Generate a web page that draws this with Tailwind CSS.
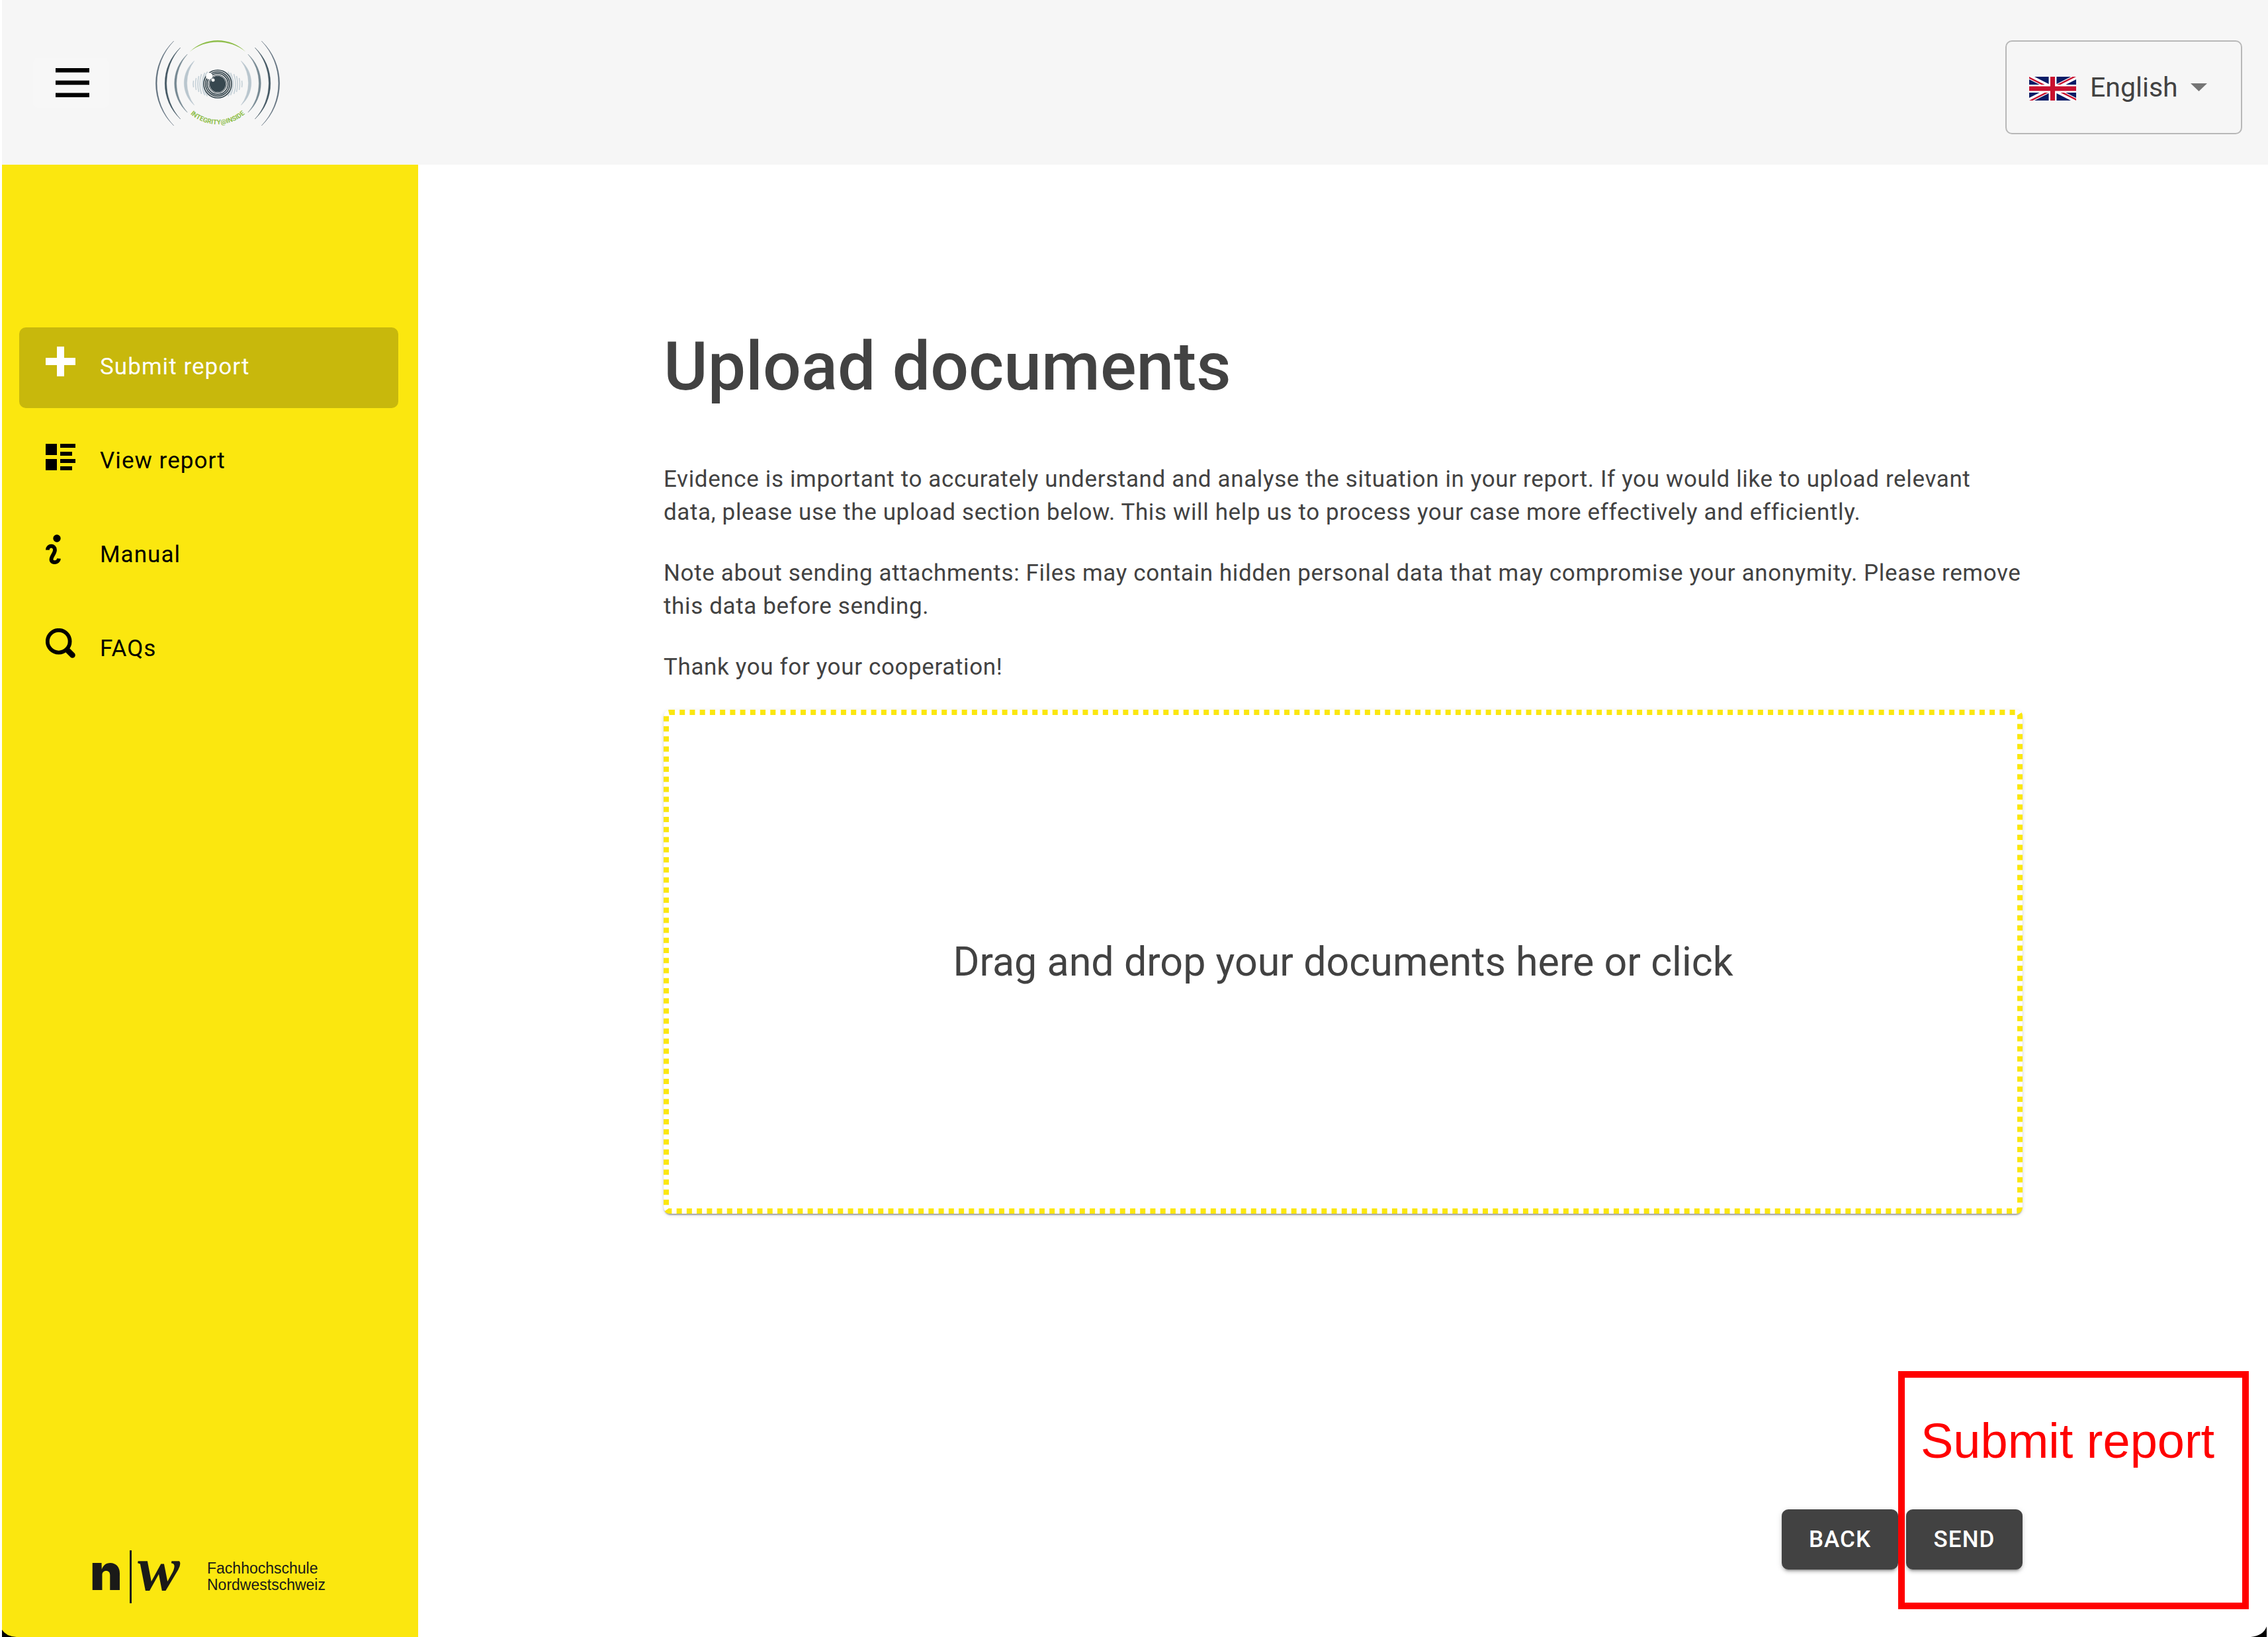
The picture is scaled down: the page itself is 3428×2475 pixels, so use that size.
<!DOCTYPE html>
<html lang="en">
<head>
<meta charset="utf-8">
<meta name="viewport" content="width=device-width, initial-scale=1">
<title>Upload documents</title>
<script src="https://cdn.jsdelivr.net/npm/@tailwindcss/browser@4"></script>
</head>
<body class="relative flex min-h-screen flex-col bg-white pl-[3px] font-['Roboto',sans-serif] text-[35px] leading-[50px] text-[#424242]">

<header class="flex h-[249px] shrink-0 items-center bg-[#f6f6f6] pr-[39px] pl-[47px]">
  <button type="button" aria-label="Toggle menu" class="flex h-[76px] w-[114px] items-center rounded-lg bg-[#f7f7f7] pl-[34px]">
    <svg class="h-[44px] w-[51px]" viewBox="0 0 51 44" aria-hidden="true"><path d="M0 0h51v6.500H0zM0 18.700h51v6.500H0zM0 37.500h51v6.500H0z"/></svg>
  </button>
  <a href="#" aria-label="Integrity@Inside" class="ml-[70px] block">
    <svg class="mt-1 h-[134px] w-[190px]" viewBox="-95 -67 190 134" aria-hidden="true">
      <defs>
        <g id="waves" stroke-width=".4">
          <path fill="#5a6b78" stroke="#5a6b78" d="M-66.300-65A88.700 88.700 0 0 0-66.300 63A92.800 92.800 0 0 1-66.300-65z"/>
          <path fill="#3f535f" stroke="#3f535f" d="M-56.300-55A73.800 73.800 0 0 0-56.300 53A79.900 79.900 0 0 1-56.300-55z"/>
          <path fill="#748791" stroke="#748791" d="M-45.800-45A59.400 59.400 0 0 0-45.800 43A66.900 66.900 0 0 1-45.800-45z"/>
          <path fill="#b9c6ce" stroke="#b9c6ce" d="M-35.300-35A44 44 0 0 0-35.300 32A56 56 0 0 1-35.300-35z"/>
          <g fill="none" stroke="#c3cfd6" stroke-width="1.500">
            <path d="M-36.500-5q-1 5 0 10M-32.500-9q-2 9 0 18M-28.500-12q-3 12 0 24M-24.500-15q-5 15 0 30M-19.500-17q-8 17 0 34M-15.500-18.500q-12 18.500 0 37"/>
          </g>
        </g>
        <path id="motto" d="M-62-1A62 62 0 0 0 62-1"/>
      </defs>
      <use href="#waves"/>
      <use href="#waves" transform="scale(-1 1)"/>
      <path fill="#8fbe4b" d="M-42.500-48.500A60.400 60.400 0 0 1 42.500-48.500A67.700 67.700 0 0 0-42.500-48.500z"/>
      <circle r="22" fill="#f6f6f6"/>
      <g fill="none" stroke="#37474f" stroke-width="1.700"><circle r="21"/><circle r="18.300"/><circle r="15.800"/><circle r="13.400" stroke-width="1"/></g>
      <circle r="12.200" fill="#37474f"/>
      <circle cx="-12.800" cy="-12" r="5" fill="#fff"/><circle cx="-7" cy="-6" r="2.500" fill="#fff"/>
      <text class="font-['Roboto',sans-serif] text-[10px] font-bold" fill="#8fbe4b" text-anchor="middle"><textPath href="#motto" startOffset="50%">INTEGRITY@INSIDE</textPath></text>
    </svg>
  </a>
  <div class="mt-[15px] ml-auto flex h-[142px] w-[358px] items-center rounded-[10px] border-2 border-[#b8b8b8] pl-[34px]">
    <svg class="mt-1 h-[36px] w-[71px] shrink-0" viewBox="0 0 60 30" preserveAspectRatio="none" aria-hidden="true">
      <defs><clipPath id="saltire"><path d="M30 15h30v15zv15H0zH0V0zV0h30z"/></clipPath></defs>
      <path fill="#0b1c66" d="M0 0h60v30H0z"/>
      <path stroke="#fff" stroke-width="6" d="M0 0l60 30M60 0L0 30"/>
      <path stroke="#c8102e" stroke-width="4" clip-path="url(#saltire)" d="M0 0l60 30M60 0L0 30"/>
      <path stroke="#fff" stroke-width="10" d="M30 0v30M0 15h60"/>
      <path stroke="#c8102e" stroke-width="6" d="M30 0v30M0 15h60"/>
    </svg>
    <select aria-label="Language" class="ml-[21px] w-[152px] appearance-none bg-transparent text-[41px] leading-[60px]"><option>English</option></select>
    <svg class="h-[12px] w-[25px]" viewBox="0 0 25 12" aria-hidden="true"><path fill="#757575" d="M0 0h25L12.500 12z"/></svg>
  </div>
</header>

<div class="flex grow">
  <aside class="flex w-[629px] shrink-0 flex-col bg-[#fbe70f] px-[26px] pt-[246px] pb-[25px] text-black">
    <nav class="flex w-[573px] flex-col gap-5 tracking-[0.03em]">
      <a href="#" aria-current="page" class="flex h-[122px] items-center gap-[37px] rounded-[10px] bg-[#c8b80c] pb-[2px] pl-[40px] text-white">
        <svg class="mb-[18px] size-[45px]" viewBox="0 0 45 45" fill="currentColor" aria-hidden="true"><path d="M17 0h11v17h17v11H28v17H17V28H0V17h17z"/></svg>Submit report</a>
      <a href="#" class="flex h-[122px] items-center gap-[37px] rounded-[10px] pb-[2px] pl-[40px]">
        <svg class="mb-[18px] size-[45px]" viewBox="0 0 45 45" fill="currentColor" aria-hidden="true"><path d="M0 5h17v17H0zM0 28h17v17H0zM22 5h23v6H22zM22 17h18v6H22zM22 28h23v6H22zM22 39h18v6H22z"/></svg>View report</a>
      <a href="#" class="flex h-[122px] items-center gap-[37px] rounded-[10px] pb-[2px] pl-[40px]">
        <svg class="mb-[18px] size-[45px]" viewBox="0 0 45 45" aria-hidden="true"><circle cx="17" cy="6" r="5.700"/><path fill="none" stroke="currentColor" stroke-width="5.800" d="M2.900 23.500C3 16 14 15.500 14 23.500C14 29 8.500 33 8.500 38C8.500 44 19.500 43.500 20 36.500"/></svg>Manual</a>
      <a href="#" class="flex h-[122px] items-center gap-[37px] rounded-[10px] pb-[2px] pl-[40px]">
        <svg class="mb-[18px] size-[45px]" viewBox="0 0 45 45" fill="none" stroke="currentColor" aria-hidden="true"><circle cx="19.700" cy="19.700" r="16.900" stroke-width="5.800"/><path stroke-width="8.500" stroke-linecap="round" d="M34 34l6.500 6.500"/></svg>FAQs</a>
    </nav>
    <a href="#" class="mt-auto flex items-center pl-[100px] text-[#1a1a18]">
      <svg class="h-[132px] w-[170px]" viewBox="-10 -25 170 132" fill="currentColor" aria-hidden="true">
        <text x="-3" y="61" class="font-['Inter',sans-serif] text-[75px] font-black">n</text>
        <path d="M57 1h3v80h-3z"/>
        <text x="69" y="61" class="font-['Liberation_Serif',serif] text-[96px] font-bold italic">w</text>
      </svg>
      <span class="ml-[14px] font-['Liberation_Sans',sans-serif] text-[23px] leading-[25px]">Fachhochschule<br>Nordwestschweiz</span>
    </a>
  </aside>

  <main class="flex grow flex-col px-10 pt-[245px] pb-[102px]">
    <div class="mx-auto flex w-full max-w-[2054px] grow flex-col">
      <h1 class="mb-[86px] text-[102px] leading-[120px] font-medium">Upload documents</h1>
      <div class="flex flex-col gap-[42px] tracking-[0.018em]">
        <p>Evidence is important to accurately understand and analyse the situation in your report. If you would like to upload relevant data, please use the upload section below. This will help us to process your case more effectively and efficiently.</p>
        <p>Note about sending attachments: Files may contain hidden personal data that may compromise your anonymity. Please remove this data before sending.</p>
        <p>Thank you for your cooperation!</p>
      </div>
      <label class="relative mt-[39px] flex h-[762px] cursor-pointer items-center justify-center rounded-[10px] bg-white text-[61px] leading-[80px] shadow-[0_4px_2px_-2px_rgba(0,0,0,0.2),0_2px_2px_rgba(0,0,0,0.14),0_2px_6px_rgba(0,0,0,0.12)]">
        <svg class="absolute inset-0 size-full" aria-hidden="true"><rect x="4" y="4" rx="5" class="h-[calc(100%-8px)] w-[calc(100%-8px)]" fill="none" stroke="#fbe70f" stroke-width="8" stroke-dasharray="8 7.230"/></svg>
        <input type="file" multiple class="sr-only">
        <span>Drag and drop your documents here or click</span>
      </label>
      <div class="mt-auto flex justify-end gap-[12px] text-white">
        <button type="button" class="h-[91px] w-[176px] rounded-[10px] bg-[#424242] font-medium tracking-[0.03em] shadow-[0_6px_2px_-4px_rgba(0,0,0,0.2),0_4px_4px_rgba(0,0,0,0.14),0_2px_10px_rgba(0,0,0,0.12)]">BACK</button>
        <button type="button" class="h-[91px] w-[176px] rounded-[10px] bg-[#424242] font-medium tracking-[0.03em] shadow-[0_6px_2px_-4px_rgba(0,0,0,0.2),0_4px_4px_rgba(0,0,0,0.14),0_2px_10px_rgba(0,0,0,0.12)]">SEND</button>
      </div>
    </div>
  </main>
</div>

<div class="pointer-events-none absolute right-[29px] bottom-[42px] h-[360px] w-[530px] border-10 border-[#ff0000] pt-[54px] pl-[24px] font-['Liberation_Sans',sans-serif] text-[74px] leading-[84px] text-[#ff0000]">Submit report</div>

<svg class="absolute bottom-0 left-[3px] h-[12px] w-[22px]" viewBox="0 0 22 12" aria-hidden="true"><path d="M0 1Q6 11 22 12H0z"/></svg>
<svg class="absolute right-[2px] bottom-0 h-[16px] w-[24px]" viewBox="0 0 24 16" aria-hidden="true"><path d="M24 0Q19 14 0 16H24z"/></svg>
</body>
</html>
